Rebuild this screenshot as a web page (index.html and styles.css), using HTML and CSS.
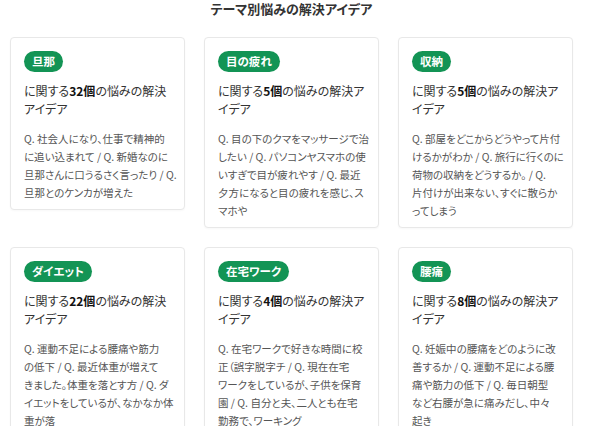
FILE: index.html
```html
<!DOCTYPE html>
<html lang="ja">
<head>
<meta charset="utf-8">
<title>テーマ別悩みの解決アイデア</title>
<link rel="stylesheet" href="styles.css">
</head>
<body>
<div class="wrap">
  <h2 class="title">テーマ別悩みの解決アイデア</h2>
  <div class="grid">
    <div class="card">
      <span class="badge">旦那</span>
      <p class="head">に関する<b>32個</b>の悩みの解決アイデア</p>
      <p class="body">Q. 社会人になり、仕事で精神的<br>に追い込まれて / Q. 新婚なのに<br>旦那さんに口うるさく言ったり / Q.<br>旦那とのケンカが増えた</p>
    </div>
    <div class="card">
      <span class="badge">目の疲れ</span>
      <p class="head">に関する<b>5個</b>の悩みの解決アイデア</p>
      <p class="body">Q. 目の下のクマをマッサージで治<br>したい / Q. パソコンヤスマホの使<br>いすぎで目が疲れやす / Q. 最近<br>夕方になると目の疲れを感じ、ス<br>マホや</p>
    </div>
    <div class="card">
      <span class="badge">収納</span>
      <p class="head">に関する<b>5個</b>の悩みの解決アイデア</p>
      <p class="body">Q. 部屋をどこからどうやって片付<br>けるかがわか / Q. 旅行に行くのに<br>荷物の収納をどうするか。 / Q.<br>片付けが出来ない、すぐに散らか<br>ってしまう</p>
    </div>
    <div class="card">
      <span class="badge">ダイエット</span>
      <p class="head">に関する<b>22個</b>の悩みの解決アイデア</p>
      <p class="body">Q. 運動不足による腰痛や筋力<br>の低下 / Q. 最近体重が増えて<br>きました。体重を落とす方 / Q. ダ<br>イエットをしているが、なかなか体<br>重が落</p>
    </div>
    <div class="card">
      <span class="badge">在宅ワーク</span>
      <p class="head">に関する<b>4個</b>の悩みの解決アイデア</p>
      <p class="body">Q. 在宅ワークで好きな時間に校<br>正（誤字脱字チ / Q. 現在在宅<br>ワークをしているが、子供を保育<br>園 / Q. 自分と夫、二人とも在宅<br>勤務で、ワーキング</p>
    </div>
    <div class="card">
      <span class="badge">腰痛</span>
      <p class="head">に関する<b>8個</b>の悩みの解決アイデア</p>
      <p class="body">Q. 妊娠中の腰痛をどのように改<br>善するか / Q. 運動不足による腰<br>痛や筋力の低下 / Q. 毎日朝型<br>など右腰が急に痛みだし、中々<br>起き</p>
    </div>
  </div>
</div>
</body>
</html>
```
FILE: styles.css
```css
* { box-sizing: border-box; }
html, body { margin: 0; padding: 0; background: #fff; }
body {
  font-family: "Noto Sans CJK JP", "Noto Sans", sans-serif;
  font-feature-settings: "palt";
  color: #333;
}
.wrap {
  width: 563px;
  margin-left: 10px;
}
.title {
  margin: 0 0 19px;
  font-size: 13px;
  line-height: 18px;
  font-weight: 700;
  text-align: center;
  color: #333;
}
.grid {
  display: grid;
  grid-template-columns: repeat(3, 175px);
  column-gap: 19px;
  row-gap: 19px;
  align-items: start;
}
.card {
  background: #fff;
  border: 1px solid #e8e8e8;
  border-radius: 4px;
  padding: 13px 9px 7px 13px;
  box-shadow: 0 1px 2px rgba(0,0,0,0.03);
}
.badge {
  display: inline-block;
  vertical-align: top;
  height: 21px;
  line-height: 21px;
  padding: 0 8px;
  border-radius: 11px;
  background: #139455;
  color: #fff;
  font-size: 11.5px;
  font-weight: 700;
}
.head {
  margin: 7px 0 0;
  font-size: 12px;
  line-height: 18px;
  color: #333;
}
.head b { font-weight: 700; color: #111; }
.body {
  margin: 12px 0 0;
  font-size: 10.5px;
  line-height: 18px;
  color: #555;
  white-space: nowrap;
}
```
